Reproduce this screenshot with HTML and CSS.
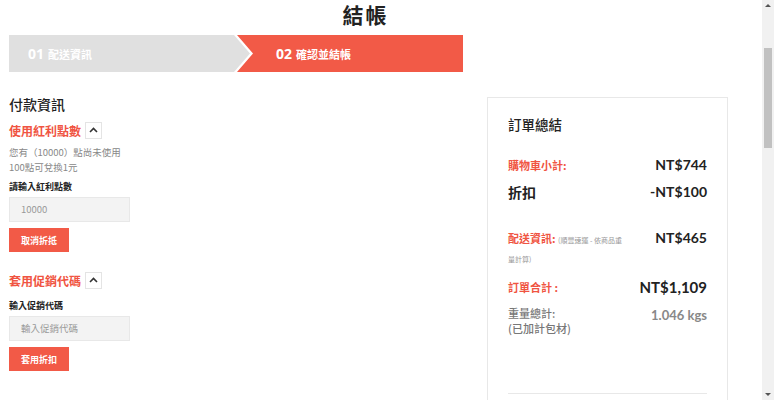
FILE: index.html
```html
<!DOCTYPE html>
<html lang="zh-Hant">
<head>
<meta charset="UTF-8">
<meta name="viewport" content="width=device-width, initial-scale=1.0">
<title>結帳</title>
<link rel="stylesheet" href="styles.css">
</head>
<body>
<div class="page">
  <h1 class="title">結帳</h1>
  <div class="steps">
    <div class="step done"><span class="num">01</span> 配送資訊</div>
    <div class="step active"><span class="num">02</span> 確認並結帳</div>
  </div>

  <div class="main">
    <div class="left">
      <h2 class="section-title">付款資訊</h2>

      <div class="block-head">
        <span class="red-title">使用紅利點數</span>
        <span class="toggle"><svg width="9" height="6" viewBox="0 0 9 6"><path d="M1 5 L4.5 1.5 L8 5" fill="none" stroke="#333" stroke-width="1.6"/></svg></span>
      </div>
      <p class="hint">您有（10000）點尚未使用<br>100點可兌換1元</p>
      <div class="label">請輸入紅利點數</div>
      <div class="input">10000</div>
      <button class="btn">取消折抵</button>

      <div class="block-head second">
        <span class="red-title">套用促銷代碼</span>
        <span class="toggle"><svg width="9" height="6" viewBox="0 0 9 6"><path d="M1 5 L4.5 1.5 L8 5" fill="none" stroke="#333" stroke-width="1.6"/></svg></span>
      </div>
      <div class="label">輸入促銷代碼</div>
      <div class="input">輸入促銷代碼</div>
      <button class="btn">套用折扣</button>
    </div>

    <aside class="summary">
      <h3 class="summary-title">訂單總結</h3>
      <div class="row r-sub">
        <span class="key red">購物車小計:</span>
        <span class="amt">NT$744</span>
      </div>
      <div class="row r-disc">
        <span class="key big">折扣</span>
        <span class="amt">-NT$100</span>
      </div>
      <div class="row r-ship">
        <span class="key red">配送資訊: <small>(順豐速運 - 依商品重量計算)</small></span>
        <span class="amt">NT$465</span>
      </div>
      <div class="row r-total">
        <span class="key red">訂單合計 :</span>
        <span class="amt total">NT$1,109</span>
      </div>
      <div class="row r-weight">
        <span class="key grey">重量總計:<br>(已加計包材)</span>
        <span class="amt grey">1.046 kgs</span>
      </div>
      <div class="divider"></div>
    </aside>
  </div>
</div>

<div class="scrollbar">
  <div class="arrow up"></div>
  <div class="thumb"></div>
  <div class="arrow down"></div>
</div>
</body>
</html>
```

FILE: styles.css
```css
body {
  margin: 0;
  font-family: "Noto Sans CJK TC", "Noto Sans", sans-serif;
  color: #222;
  background: #fff;
  overflow: hidden;
}
.page {
  width: 730px;
  padding-left: 9px;
  box-sizing: border-box;
}
.title {
  margin: 0;
  padding-right: 8px;
  text-align: center;
  font-size: 21px;
  font-weight: 700;
  letter-spacing: 2px;
  line-height: 28px;
}
.steps {
  display: flex;
  width: 454px;
  height: 37px;
  margin-top: 7px;
}
.step {
  height: 37px;
  display: flex;
  align-items: center;
  color: #fff;
  font-size: 11px;
  font-weight: 700;
}
.step .num {
  font-family: "Open Sans", sans-serif;
  font-size: 14px;
  margin-right: 4px;
}
.step.done {
  width: 241px;
  background: #e0e0e0;
  padding-left: 19px;
  box-sizing: border-box;
  clip-path: polygon(0 0, 225px 0, 241px 50%, 225px 100%, 0 100%);
}
.step.active {
  flex: 1;
  margin-left: -13px;
  background: #f25a47;
  padding-left: 39px;
  clip-path: polygon(0 0, 100% 0, 100% 100%, 0 100%, 16px 50%);
}
.main {
  display: flex;
  align-items: flex-start;
}
.left {
  width: 478px;
}
.section-title {
  margin: 21px 0 0;
  font-size: 14px;
  font-weight: 500;
  line-height: 22px;
}
.block-head {
  display: flex;
  align-items: center;
  margin-top: 4px;
  height: 22px;
}
.block-head.second {
  margin-top: 17px;
}
.red-title {
  color: #f05442;
  font-size: 12px;
  font-weight: 700;
  width: 76px;
}
.toggle {
  width: 15px;
  height: 15px;
  border: 1px solid #e4e4e4;
  display: flex;
  align-items: center;
  justify-content: center;
}
.hint {
  margin: 4px 0 0;
  font-size: 9.5px;
  line-height: 15px;
  color: #888;
}
.label {
  margin-top: 5px;
  font-size: 9px;
  font-weight: 700;
  line-height: 14px;
  color: #222;
}
.block-head.second + .label {
  margin-top: 8px;
}
.input {
  width: 108px;
  height: 23px;
  margin-top: 3px;
  background: #f3f3f3;
  border: 1px solid #e8e8e8;
  font-size: 9.5px;
  line-height: 23px;
  color: #999;
  padding-left: 11px;
}
.btn {
  display: block;
  margin-top: 6px;
  width: 60px;
  height: 24px;
  border: 0;
  padding: 0;
  background: #f25a47;
  color: #fff;
  font-family: "Noto Sans CJK TC", sans-serif;
  font-size: 9px;
  font-weight: 700;
}
.summary {
  width: 241px;
  height: 320px;
  margin-top: 25px;
  border: 1px solid #e8e8e8;
  padding: 0 20px;
  box-sizing: border-box;
}
.summary-title {
  margin: 16px 0 0;
  font-size: 13.5px;
  font-weight: 500;
  line-height: 20px;
}
.row {
  display: flex;
  justify-content: space-between;
  align-items: flex-start;
}
.key {
  font-size: 11px;
  font-weight: 500;
  line-height: 20px;
}
.key.red {
  color: #f05442;
  font-weight: 700;
}
.key.big {
  font-size: 14px;
  font-weight: 700;
  line-height: 22px;
}
.key.grey {
  color: #777;
  line-height: 15px;
}
.key small {
  font-size: 7px;
  font-weight: 400;
  color: #999;
}
.amt {
  font-family: Lato, "Noto Sans", sans-serif;
  font-size: 14px;
  font-weight: 700;
  line-height: 20px;
  color: #222;
}
.amt.total {
  font-size: 15px;
}
.amt.grey {
  color: #888;
  font-size: 13px;
}
.r-sub {
  margin-top: 21px;
}
.r-disc {
  margin-top: 6px;
}
.r-disc .amt {
  line-height: 22px;
}
.r-ship {
  margin-top: 25px;
}
.r-ship .key {
  width: 118px;
  line-height: 17px;
  margin-top: 2px;
}
.r-total {
  margin-top: 9px;
}
.r-weight {
  margin-top: 9px;
}
.r-weight .amt {
  margin-top: -1px;
}
.divider {
  margin-top: 57px;
  border-top: 1px solid #e8e8e8;
}
.scrollbar {
  position: fixed;
  top: 0;
  right: 0;
  width: 12px;
  height: 400px;
  background: #f1f1f1;
}
.thumb {
  position: absolute;
  left: 2px;
  top: 48px;
  width: 8px;
  height: 100px;
  background: #c1c1c1;
}
.arrow {
  position: absolute;
  left: 3px;
  width: 0;
  height: 0;
  border-left: 3px solid transparent;
  border-right: 3px solid transparent;
}
.arrow.up {
  top: 4px;
  border-bottom: 3px solid #555;
}
.arrow.down {
  bottom: 4px;
  border-top: 3px solid #555;
}
```
